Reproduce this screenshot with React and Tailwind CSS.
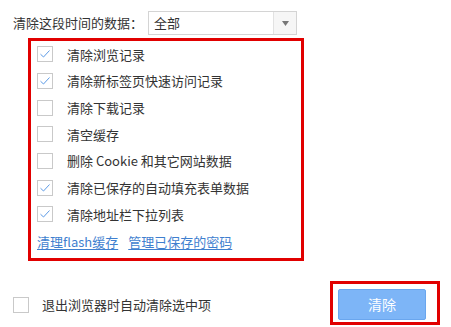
import React from "react";

const items = [
  { label: "清除浏览记录", checked: true },
  { label: "清除新标签页快速访问记录", checked: true },
  { label: "清除下载记录", checked: false },
  { label: "清空缓存", checked: false },
  { label: "删除 Cookie 和其它网站数据", checked: false },
  { label: "清除已保存的自动填充表单数据", checked: true },
  { label: "清除地址栏下拉列表", checked: true },
];

function Box({ checked }) {
  return (
    <span className="flex h-[16px] w-[16px] shrink-0 items-center justify-center border border-[#c9c9c9] bg-white">
      {checked && (
        <svg width="12" height="10" viewBox="0 0 12 10">
          <path d="M1.5 5.2 L4.5 8 L10.5 1.5" fill="none" stroke="#5d9be6" strokeWidth="1" />
        </svg>
      )}
    </span>
  );
}

export default function App() {
  return (
    <div
      className="relative h-[327px] w-[451px] overflow-hidden bg-white text-[13px] text-[#333]"
      style={{ fontFamily: '"Noto Sans CJK SC", "Liberation Sans", sans-serif' }}
    >
      {/* time range */}
      <div className="flex items-center pl-[13px] pt-[11px]">
        <span className="w-[135px] leading-[24px]">清除这段时间的数据：</span>
        <div className="flex h-[24px] w-[149px] border border-[#d4d4d4]">
          <span className="flex-1 pl-[5px] leading-[22px]">全部</span>
          <span className="flex w-[23px] items-center justify-center border-l border-[#e2e2e2] bg-[#f6f6f6]">
            <svg width="7" height="5" viewBox="0 0 7 5">
              <path d="M0 0 H7 L3.5 5 Z" fill="#777" />
            </svg>
          </span>
        </div>
      </div>

      {/* options */}
      <div className="ml-[28px] mt-[3px] h-[223px] w-[276px] border-[3px] border-[#e10000] pl-[6px]">
        {items.map((it) => (
          <div key={it.label} className="flex h-[26.7px] items-center gap-[14px]">
            <Box checked={it.checked} />
            <span>{it.label}</span>
          </div>
        ))}
        <div className="mt-[4px] flex gap-[10px] text-[#3f7fcf] underline underline-offset-2">
          <span>清理flash缓存</span>
          <span>管理已保存的密码</span>
        </div>
      </div>

      {/* bottom */}
      <div className="mt-[20px] flex items-center justify-between pl-[13px] pr-[11px]">
        <div className="flex items-center gap-[13px] pt-[3px]">
          <Box checked={false} />
          <span>退出浏览器时自动清除选中项</span>
        </div>
        <div className="h-[44px] w-[110px] border-[3px] border-[#e10000] pl-[5px] pt-[5px]">
          <button className="flex h-[31px] w-[88px] items-center justify-center rounded-[2px] border border-[#6aa6ee] bg-[#7db5f7] text-[14px] text-white">
            清除
          </button>
        </div>
      </div>
    </div>
  );
}
